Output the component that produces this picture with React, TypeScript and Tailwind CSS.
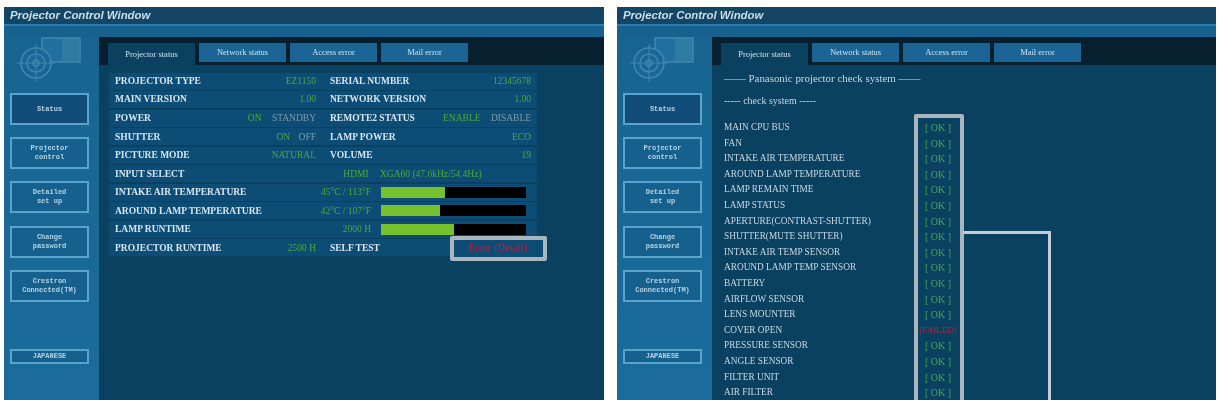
const serif = "font-['Liberation_Serif',serif]";

const navItems = [
  { lines: ['Status'], active: true },
  { lines: ['Projector', 'control'] },
  { lines: ['Detailed', 'set up'] },
  { lines: ['Change', 'password'] },
  { lines: ['Crestron', 'Connected(TM)'] },
];

const tabs = ['Projector status', 'Network status', 'Access error', 'Mail error'];

const checks: [string, boolean][] = [
  ['MAIN CPU BUS', true],
  ['FAN', true],
  ['INTAKE AIR TEMPERATURE', true],
  ['AROUND LAMP TEMPERATURE', true],
  ['LAMP REMAIN TIME', true],
  ['LAMP STATUS', true],
  ['APERTURE(CONTRAST-SHUTTER)', true],
  ['SHUTTER(MUTE SHUTTER)', true],
  ['INTAKE AIR TEMP SENSOR', true],
  ['AROUND LAMP TEMP SENSOR', true],
  ['BATTERY', true],
  ['AIRFLOW SENSOR', true],
  ['LENS MOUNTER', true],
  ['COVER OPEN', false],
  ['PRESSURE SENSOR', true],
  ['ANGLE SENSOR', true],
  ['FILTER UNIT', true],
  ['AIR FILTER', true],
];

function Logo() {
  return (
    <svg width="70" height="46" viewBox="0 0 70 46" fill="none" stroke="#3f87ae" className="ml-[12px]">
      <rect x="26" y="1" width="38" height="24" fill="#20709f" strokeWidth="1.5" />
      <rect x="46" y="2" width="17" height="22" fill="#2f7ca3" stroke="none" />
      <circle cx="20" cy="26" r="15" fill="#1a6696" strokeWidth="1.5" />
      <circle cx="20" cy="26" r="9" strokeWidth="1.5" />
      <circle cx="20" cy="26" r="3" strokeWidth="1.5" />
      <path d="M20 7v38M1 26h38" strokeWidth="1" />
    </svg>
  );
}

function Sidebar() {
  return (
    <div className="flex w-[95px] shrink-0 flex-col bg-gradient-to-b from-[#176490] to-[#1b6c9c] pr-[10px] pl-[6px]">
      <div className="ml-[-6px] h-[56px]">
        <Logo />
      </div>
      <div className="flex flex-col gap-[12.2px]">
        {navItems.map((item) => (
          <div
            key={item.lines[0]}
            className={`flex h-[32px] flex-col items-center justify-center border-2 border-[#5aa3cc] font-['Liberation_Mono',monospace] text-[7px] leading-[9px] font-bold text-[#b6d3e3] ${item.active ? 'bg-[#114d78]' : 'bg-[#16608e]'}`}
          >
            {item.lines.map((l) => (
              <span key={l}>{l}</span>
            ))}
          </div>
        ))}
      </div>
      <div className="mt-[47px] flex h-[15px] items-center justify-center border-2 border-[#5aa3cc] bg-[#16608e] font-['Liberation_Mono',monospace] text-[7px] font-bold text-[#b6d3e3]">
        JAPANESE
      </div>
    </div>
  );
}

function TabStrip() {
  return (
    <div className={`flex h-[28px] shrink-0 gap-[4px] bg-[#07202f] pt-[6px] pl-[9px] ${serif} text-[8.5px] text-[#cfe2ec]`}>
      {tabs.map((t, i) => (
        <div
          key={t}
          className={`flex w-[87px] items-center justify-center ${i === 0 ? 'h-[22px] bg-[#0a4060]' : 'h-[19px] bg-[#1a6595]'}`}
        >
          {t}
        </div>
      ))}
    </div>
  );
}

function Label({ children }: { children: string }) {
  return <span className="font-bold whitespace-nowrap text-[#d5e6f0]">{children}</span>;
}

function Row({ children }: { children: React.ReactNode }) {
  return <div className="flex h-[17px] items-center bg-[#0d4c75] pl-[6px] text-[9.5px]">{children}</div>;
}

function Pair({ left, value, right, value2 }: { left: string; value: React.ReactNode; right: string; value2: React.ReactNode }) {
  return (
    <Row>
      <div className="flex w-[201px] justify-between">
        <Label>{left}</Label>
        <span className="whitespace-nowrap text-[#4fa83a]">{value}</span>
      </div>
      <div className="ml-[14px] flex w-[201px] justify-between">
        <Label>{right}</Label>
        <span className="whitespace-nowrap text-[#4fa83a]">{value2}</span>
      </div>
    </Row>
  );
}

function BarRow({ label, value, fill }: { label: string; value: string; fill: number }) {
  return (
    <Row>
      <div className="flex w-[256px] justify-between">
        <Label>{label}</Label>
        <span className="whitespace-nowrap text-[#4fa83a]">{value}</span>
      </div>
      <div className="ml-[10px] h-[11px] w-[145px] bg-black">
        <div className="h-full bg-[#76c22e]" style={{ width: `${fill}%` }} />
      </div>
    </Row>
  );
}

function StatusPanel() {
  const grey = 'text-[#7f9aa8]';
  return (
    <div className={`relative h-full bg-[#0a4060] pt-[7.5px] pl-[10px] ${serif}`}>
      <div className="flex w-[428px] flex-col gap-[1.55px]">
        <Pair left="PROJECTOR TYPE" value="EZ1150" right="SERIAL NUMBER" value2="12345678" />
        <Pair left="MAIN VERSION" value="1.00" right="NETWORK VERSION" value2="1.00" />
        <Pair
          left="POWER"
          value={<>ON <span className={`ml-[8px] ${grey}`}>STANDBY</span></>}
          right="REMOTE2 STATUS"
          value2={<>ENABLE <span className={`ml-[8px] ${grey}`}>DISABLE</span></>}
        />
        <Pair
          left="SHUTTER"
          value={<>ON <span className={`ml-[6px] ${grey}`}>OFF</span></>}
          right="LAMP POWER"
          value2="ECO"
        />
        <Pair left="PICTURE MODE" value="NATURAL" right="VOLUME" value2="19" />
        <Row>
          <Label>INPUT SELECT</Label>
          <span className="ml-[159px] whitespace-nowrap text-[#4fa83a]">
            HDMI <span className="ml-[9px]">XGA60 (47.6kHz/54.4Hz)</span>
          </span>
        </Row>
        <BarRow label="INTAKE AIR TEMPERATURE" value="45°C / 113°F" fill={44} />
        <BarRow label="AROUND LAMP TEMPERATURE" value="42°C / 107°F" fill={41} />
        <BarRow label="LAMP RUNTIME" value="2000 H" fill={50} />
        <Pair left="PROJECTOR RUNTIME" value="2500 H" right="SELF TEST" value2="" />
      </div>
      <div className="absolute top-[171px] left-[351px] flex h-[25px] w-[97px] items-center justify-center rounded-[2px] border-[4px] border-[#a9b6bd] bg-[#0d4c75] text-[9.5px] tracking-[0.5px] text-[#b3263f]">
        Error (Detail)
      </div>
    </div>
  );
}

function CheckPanel() {
  return (
    <div className={`relative h-full overflow-hidden bg-[#0a4060] pl-[12px] text-[#c6d8e2] ${serif}`}>
      <div className="pt-[6px] text-[10.9px] leading-[15px]">—— Panasonic projector check system ——</div>
      <div className="mt-[8px] text-[10px] leading-[14px]">----- check system -----</div>
      <div className="mt-[12px] flex w-[239px] flex-col text-[9.3px] leading-[15.6px]">
        {checks.map(([name, ok]) => (
          <div key={name} className="flex h-[15.6px] justify-between">
            <span className="whitespace-nowrap">{name}</span>
            <span className={ok ? 'w-[50px] text-center text-[10px] text-[#45a657]' : 'w-[50px] text-center text-[9px] text-[#b3263f]'}>
              {ok ? '[ OK ]' : '[FAILED]'}
            </span>
          </div>
        ))}
      </div>
      <div className="absolute top-[49px] left-[202px] h-[400px] w-[50px] rounded-[2px] border-[4px] border-[#a9b6bd]" />
      <div className="absolute top-[166px] left-[251px] h-[400px] w-[88px] border-t-[3px] border-r-[3px] border-[#c3ced4]" />
    </div>
  );
}

function ProjectorWindow({ children, width }: { children: React.ReactNode; width: string }) {
  return (
    <div className={`flex h-[393px] shrink-0 flex-col overflow-hidden ${width}`}>
      <div className="flex h-[17px] shrink-0 items-center bg-[#154564] pl-[6px] font-['Liberation_Sans',sans-serif] text-[11.4px] font-bold text-[#c9dfeb] italic">
        Projector Control Window
      </div>
      <div className="h-[13px] shrink-0 border-t-2 border-[#2a7fb0] bg-[#17618f]" />
      <div className="flex min-h-0 flex-1">
        <Sidebar />
        <div className="flex min-w-0 flex-1 flex-col">
          <TabStrip />
          <div className="min-h-0 flex-1">{children}</div>
        </div>
      </div>
    </div>
  );
}

export default function App() {
  return (
    <div className="flex h-[400px] w-[1218px] gap-[13px] overflow-hidden bg-[#fdfdf9] pt-[7px] pl-[4px] blur-[0.5px]">
      <ProjectorWindow width="w-[600px]">
        <StatusPanel />
      </ProjectorWindow>
      <ProjectorWindow width="w-[599px]">
        <CheckPanel />
      </ProjectorWindow>
    </div>
  );
}
